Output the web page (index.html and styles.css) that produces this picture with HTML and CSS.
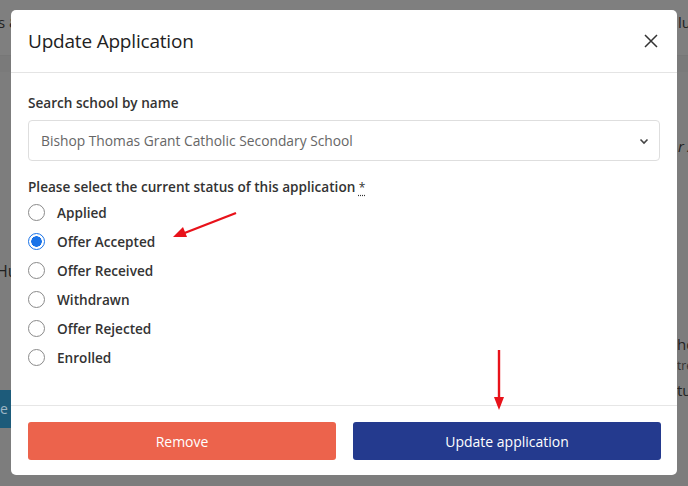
FILE: index.html
```html
<!DOCTYPE html>
<html>
<head>
<meta charset="utf-8">
<link rel="stylesheet" href="styles.css">
</head>
<body>
<div class="page">
  <div class="topbar">
    <span class="frag frag-tl">s &amp;</span>
    <span class="frag frag-tr">lu</span>
  </div>
  <div class="band"></div>
  <div class="frag frag-ra">r A</div>
  <div class="frag frag-hu">Hu</div>
  <div class="leftbtn">e r</div>
  <div class="frag frag-ho">ho</div>
  <div class="frag frag-tre">tre</div>
  <div class="frag frag-tu">tu</div>
</div>

<div class="modal">
  <div class="modal-header">
    <h1 class="modal-title">Update Application</h1>
    <button class="close" aria-label="Close">
      <svg width="14" height="14" viewBox="0 0 14 14"><path d="M1 1L13 13M13 1L1 13" stroke="#333" stroke-width="1.5" fill="none"/></svg>
    </button>
  </div>
  <div class="modal-body">
    <label class="field-label">Search school by name</label>
    <div class="select">
      <span>Bishop Thomas Grant Catholic Secondary School</span>
      <svg width="12" height="12" viewBox="0 0 12 12"><path d="M2.5 4.5L6 8L9.5 4.5" stroke="#444" stroke-width="1.6" fill="none"/></svg>
    </div>
    <div class="status-label">Please select the current status of this application <abbr title="required">*</abbr></div>
    <ul class="radios">
      <li><span class="radio"></span>Applied</li>
      <li><span class="radio checked"></span>Offer Accepted</li>
      <li><span class="radio"></span>Offer Received</li>
      <li><span class="radio"></span>Withdrawn</li>
      <li><span class="radio"></span>Offer Rejected</li>
      <li><span class="radio"></span>Enrolled</li>
    </ul>
  </div>
  <div class="modal-footer">
    <button class="btn btn-remove">Remove</button>
    <button class="btn btn-update">Update application</button>
  </div>
  <svg class="arrow arrow-1" width="70" height="30" viewBox="0 0 70 30">
    <path d="M66 3L12 24" stroke="#e8121a" stroke-width="2.4" fill="none"/>
    <path d="M3 27L13 17L17 27Z" fill="#e8121a"/>
  </svg>
  <svg class="arrow arrow-2" width="14" height="64" viewBox="0 0 14 64">
    <path d="M7 1L7 50" stroke="#e8121a" stroke-width="2.4" fill="none"/>
    <path d="M2 48L12 48L7 61Z" fill="#e8121a"/>
  </svg>
</div>
</body>
</html>
```
FILE: styles.css
```css
* { box-sizing: border-box; }
html, body { margin: 0; padding: 0; }
body {
  width: 688px;
  height: 486px;
  overflow: hidden;
  background: #7d7d7d;
  font-family: "Open Sans", "Noto Sans", sans-serif;
  color: #2b2b2b;
  position: relative;
}
.page { position: relative; width: 688px; height: 486px; overflow: hidden; }
.topbar { height: 56px; background: #7f7f7f; border-bottom: 1px solid #777; }
.band { height: 16px; background: #7a7a7a; }
.frag { position: absolute; color: #222; font-size: 15px; white-space: nowrap; }
.frag-tl { left: -2px; top: 12px; }
.frag-tr { left: 678px; top: 12px; }
.frag-ra { left: 678px; top: 136px; font-style: italic; }
.frag-hu { left: -4px; top: 260px; font-size: 16px; }
.frag-ho { left: 677px; top: 334px; }
.frag-tre { left: 677px; top: 357px; font-size: 12px; color: #333; }
.frag-tu { left: 677px; top: 380px; }
.leftbtn {
  position: absolute; left: 0; top: 390px; width: 12px; height: 38px;
  background: #1d5b7a; color: #9db6c5; font-size: 14px; line-height: 38px; overflow: hidden; white-space: nowrap;
}

.modal {
  position: absolute;
  left: 11px;
  top: 10px;
  width: 666px;
  height: 465px;
  background: #fff;
  border-radius: 5px;
  display: flex;
  flex-direction: column;
}
.modal-header {
  height: 63px;
  border-bottom: 1px solid #e4e4e4;
  display: flex;
  align-items: center;
  justify-content: space-between;
  padding: 0 16px 0 17px;
}
.modal-title {
  margin: 0;
  font-size: 19px;
  font-weight: 500;
  color: #222;
  letter-spacing: -0.2px;
}
.close {
  border: 0; background: none; padding: 0; width: 20px; height: 20px;
  display: flex; align-items: center; justify-content: center;
}
.modal-body {
  flex: 1;
  padding: 20px 17px 0 17px;
}
.field-label {
  display: block;
  font-size: 13.6px;
  font-weight: 600;
  color: #333;
  line-height: 20px;
}
.select {
  margin-top: 7px;
  height: 41px;
  border: 1px solid #dedede;
  border-radius: 4px;
  display: flex;
  align-items: center;
  justify-content: space-between;
  padding: 0 9px 0 12px;
  font-size: 13.8px;
  color: #666;
}
.status-label {
  margin-top: 16px;
  font-size: 13.6px;
  font-weight: 600;
  color: #333;
  line-height: 20px;
}
.status-label abbr {
  text-decoration: underline dotted;
  text-underline-offset: 3px;
  font-weight: 400;
  font-size: 12px;
}
.radios {
  list-style: none;
  margin: 0;
  padding: 0;
}
.radios li {
  height: 29px;
  display: flex;
  align-items: center;
  font-size: 13.6px;
  font-weight: 600;
  color: #333;
}
.radio {
  width: 17px;
  height: 17px;
  border: 1px solid #8a8a8a;
  border-radius: 50%;
  margin-right: 12px;
  flex: none;
}
.radio.checked {
  border: 1px solid #1a73e8;
  background: radial-gradient(circle, #1a73e8 0 5px, #fff 5.5px);
}
.modal-footer {
  height: 70px;
  border-top: 1px solid #e6e6e6;
  display: flex;
  gap: 17px;
  padding: 16px 16px 0 17px;
}
.btn {
  flex: 1;
  height: 38px;
  border: 0;
  border-radius: 3px;
  color: #fff;
  font-family: "Open Sans", "Noto Sans", sans-serif;
  font-size: 14px;
  font-weight: 500;
}
.btn-remove { background: #ec634c; }
.btn-update { background: #243a8e; }
.arrow { position: absolute; }
.arrow-1 { left: 159px; top: 200px; }
.arrow-2 { left: 481px; top: 339px; }
```
